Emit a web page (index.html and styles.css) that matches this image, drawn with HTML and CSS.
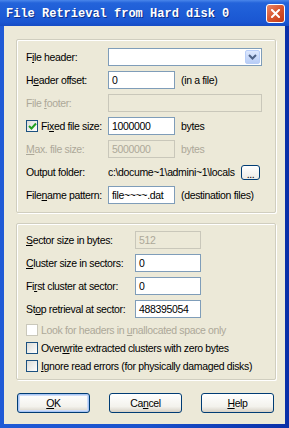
FILE: index.html
```html
<!DOCTYPE html>
<html lang="en">
<head>
    <meta charset="UTF-8">
    <title>File Retrieval from Hard disk 0</title>
    <link rel="stylesheet" href="styles.css">
</head>
<body>

    <div class="window">
        <!-- Title bar -->
        <div class="titlebar">
            <span class="title">File Retrieval from Hard disk 0</span>
            <span class="close">
                <svg width="9" height="9" viewBox="0 0 9 9">
                    <path d="M1 1 L8 8 M8 1 L1 8" stroke="#fff" stroke-width="2" stroke-linecap="square"/>
                </svg>
            </span>
        </div>

        <div class="client">
            <!-- File options -->
            <div class="group group-file">
                <div class="row">
                    <span class="lbl">F<u>i</u>le header:</span>
                    <div class="combo">
                        <span class="combo-btn">
                            <svg width="9" height="6" viewBox="0 0 9 6">
                                <path d="M1 1 L4.5 4.5 L8 1" fill="none" stroke="#4D6185" stroke-width="2"/>
                            </svg>
                        </span>
                    </div>
                </div>
                <div class="row">
                    <span class="lbl">H<u>e</u>ader offset:</span>
                    <span class="field">0</span>
                    <span class="suffix">(in a file)</span>
                </div>
                <div class="row">
                    <span class="lbl disabled">File <u>f</u>ooter:</span>
                    <span class="field wide off"></span>
                </div>
                <div class="row">
                    <span class="lbl check-lbl">
                        <span class="box">
                            <svg width="9" height="9" viewBox="0 0 9 9">
                                <path d="M1 4 L3.5 6.5 L8 1.5" fill="none" stroke="#21A121" stroke-width="2"/>
                            </svg>
                        </span>
                        <span>Fi<u>x</u>ed file size:</span>
                    </span>
                    <span class="field">1000000</span>
                    <span class="suffix">bytes</span>
                </div>
                <div class="row">
                    <span class="lbl disabled"><u>M</u>ax. file size:</span>
                    <span class="field off">5000000</span>
                    <span class="suffix disabled">bytes</span>
                </div>
                <div class="row">
                    <span class="lbl">Output folder:</span>
                    <span class="path">c:\docume~1\admini~1\locals</span>
                    <span class="small-btn">...</span>
                </div>
                <div class="row">
                    <span class="lbl">File<u>n</u>ame pattern:</span>
                    <span class="field">file~~~~.dat</span>
                    <span class="suffix">(destination files)</span>
                </div>
            </div>

            <!-- Sector options -->
            <div class="group group-sector">
                <div class="row">
                    <span class="lbl"><u>S</u>ector size in bytes:</span>
                    <span class="field off">512</span>
                </div>
                <div class="row">
                    <span class="lbl"><u>C</u>luster size in sectors:</span>
                    <span class="field">0</span>
                </div>
                <div class="row">
                    <span class="lbl">Fi<u>r</u>st cluster at sector:</span>
                    <span class="field">0</span>
                </div>
                <div class="row">
                    <span class="lbl">St<u>o</u>p retrieval at sector:</span>
                    <span class="field">488395054</span>
                </div>
                <div class="checks">
                    <div class="check disabled">
                        <span class="box off"></span>
                        <span>Look for headers in <u>u</u>nallocated space only</span>
                    </div>
                    <div class="check">
                        <span class="box"></span>
                        <span>Over<u>w</u>rite extracted clusters with zero bytes</span>
                    </div>
                    <div class="check">
                        <span class="box"></span>
                        <span><u>I</u>gnore read errors (for physically damaged disks)</span>
                    </div>
                </div>
            </div>

            <!-- Dialog buttons -->
            <div class="buttons">
                <span class="btn default"><u>O</u>K</span>
                <span class="btn">Ca<u>n</u>cel</span>
                <span class="btn"><u>H</u>elp</span>
            </div>
        </div>
    </div>

</body>
</html>
```

FILE: styles.css
```css
/* Page */
body {
    margin: 0;
    background: #fff;
    font-family: "Liberation Sans", Arial, sans-serif;
    font-size: 10.5px;
    letter-spacing: -0.35px;
    color: #000;
}

u {
    text-decoration: underline;
    text-underline-offset: 1px;
}

/* Window frame */
.window {
    width: 289px;
    height: 428px;
    display: flex;
    flex-direction: column;
    background: linear-gradient(90deg, #1f5ad6 0, #1a52cc 50%, #0a2fa8 100%);
}

.titlebar {
    height: 26px;
    display: flex;
    align-items: center;
    justify-content: space-between;
    padding: 0 4px 0 6px;
    background: linear-gradient(#4a86ea 0, #2363da 3px, #1d5cd6 14px, #1a56d2 22px, #164cc4 26px);
}

.title {
    font-family: "Liberation Mono", "Courier New", monospace;
    font-weight: bold;
    font-size: 12px;
    letter-spacing: 0;
    color: #fff;
    text-shadow: 1px 1px 0 #0d2f8a;
    margin-top: 2px;
}

.close {
    width: 19px;
    height: 19px;
    box-sizing: border-box;
    border: 1px solid #fff;
    border-radius: 3px;
    background: linear-gradient(135deg, #e9866a 0, #d8552e 50%, #c23a18 100%);
    display: flex;
    align-items: center;
    justify-content: center;
    margin-top: 1px;
}

.client {
    flex: 1;
    margin: 0 4px 4px 4px;
    background: #ece9d8;
    padding: 13px 9px 0 12px;
}

/* Group boxes */
.group {
    border: 1px solid #d0cebf;
    border-radius: 2px;
    box-shadow: inset 1px 1px 0 #fff, 1px 1px 0 #fff;
    padding: 8px 0 8px 9px;
    display: flex;
    flex-direction: column;
    gap: 5px;
}

.group-sector {
    margin-top: 10px;
    padding-top: 7px;
    padding-bottom: 4px;
}

.group-sector .lbl {
    width: 109px;
}

.group-sector .field {
    width: 66px;
}

.row {
    display: flex;
    align-items: center;
    height: 18px;
}

.lbl {
    width: 82px;
    flex-shrink: 0;
    white-space: nowrap;
}

.check-lbl {
    display: flex;
    align-items: center;
    gap: 3px;
}

.disabled {
    color: #aca899;
}

/* Edit boxes */
.field {
    width: 67px;
    height: 18px;
    box-sizing: border-box;
    border: 1px solid #7f9db9;
    background: #fff;
    padding: 0 3px;
    line-height: 16px;
    white-space: nowrap;
    overflow: hidden;
}

.field.wide {
    width: 154px;
}

.field.off {
    border-color: #c9c7ba;
    background: #ece9d8;
    color: #aca899;
}

.suffix {
    margin-left: 6px;
    white-space: nowrap;
}

/* Combo box */
.combo {
    width: 154px;
    height: 18px;
    box-sizing: border-box;
    border: 1px solid #7f9db9;
    background: #fff;
    display: flex;
    justify-content: flex-end;
    padding: 1px;
}

.combo-btn {
    width: 15px;
    box-sizing: border-box;
    border: 1px solid #b9cef8;
    border-radius: 2px;
    background: linear-gradient(#dde8fd, #b8cdf6);
    display: flex;
    align-items: center;
    justify-content: center;
}

/* Output folder */
.path {
    width: 131px;
    overflow: hidden;
    white-space: nowrap;
}

.small-btn {
    width: 19px;
    height: 15px;
    box-sizing: border-box;
    border: 1px solid #003c74;
    border-radius: 3px;
    background: linear-gradient(#fff, #ecebe6);
    display: flex;
    align-items: flex-end;
    justify-content: center;
    line-height: 10px;
    margin-left: 2px;
}

/* Checkboxes */
.box {
    width: 12px;
    height: 12px;
    box-sizing: border-box;
    border: 1px solid #1c5180;
    background: linear-gradient(135deg, #dcdcd7, #fff);
    display: inline-flex;
    align-items: center;
    justify-content: center;
    flex-shrink: 0;
}

.box.off {
    border-color: #cac8bb;
    background: #fff;
}

.checks {
    display: flex;
    flex-direction: column;
    margin-top: -2px;
}

.check {
    height: 18px;
    display: flex;
    align-items: center;
    gap: 3px;
    white-space: nowrap;
}

/* Dialog buttons */
.buttons {
    display: flex;
    gap: 19px;
    margin-top: 13px;
    padding-left: 1px;
}

.btn {
    width: 73px;
    height: 20px;
    box-sizing: border-box;
    border: 1px solid #003c74;
    border-radius: 3px;
    background: linear-gradient(#fff, #f3f2ec 70%, #d6d0c5);
    display: flex;
    align-items: center;
    justify-content: center;
}

.btn.default {
    box-shadow: inset 0 0 0 1px #a9c6f5, inset 0 0 0 2px #cddcf8;
}
```
